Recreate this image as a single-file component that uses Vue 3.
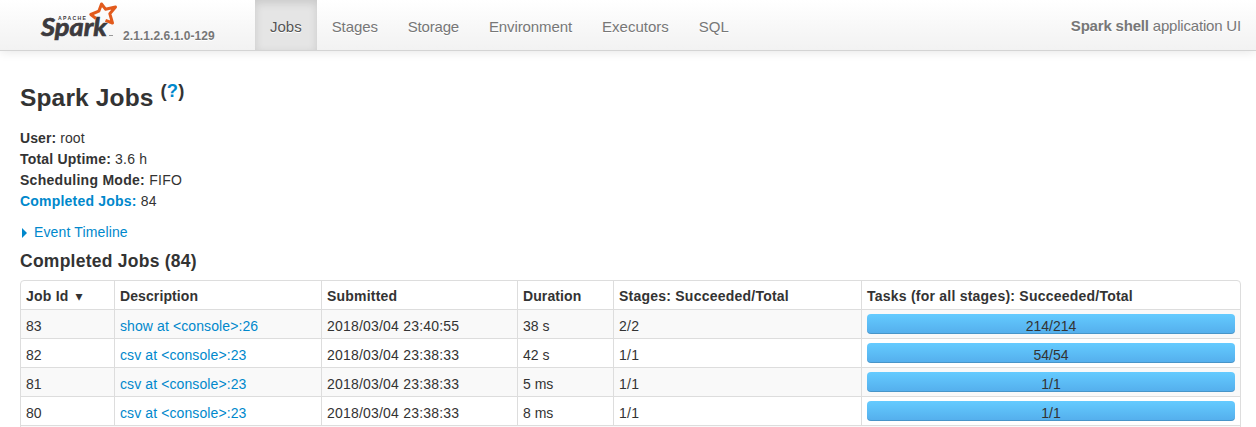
<script setup>
const tabs = ['Jobs', 'Stages', 'Storage', 'Environment', 'Executors', 'SQL']
const columns = [
  { key: 'id', label: 'Job Id' },
  { key: 'desc', label: 'Description' },
  { key: 'submitted', label: 'Submitted' },
  { key: 'duration', label: 'Duration' },
  { key: 'stages', label: 'Stages: Succeeded/Total' },
  { key: 'tasks', label: 'Tasks (for all stages): Succeeded/Total' },
]
const jobs = [
  { id: 83, desc: 'show at <console>:26', submitted: '2018/03/04 23:40:55', duration: '38 s', stages: '2/2', tasks: '214/214' },
  { id: 82, desc: 'csv at <console>:23', submitted: '2018/03/04 23:38:33', duration: '42 s', stages: '1/1', tasks: '54/54' },
  { id: 81, desc: 'csv at <console>:23', submitted: '2018/03/04 23:38:33', duration: '5 ms', stages: '1/1', tasks: '1/1' },
  { id: 80, desc: 'csv at <console>:23', submitted: '2018/03/04 23:38:33', duration: '8 ms', stages: '1/1', tasks: '1/1' },
]
</script>

<template>
  <div class="page">
    <header class="navbar">
      <div class="brand">
        <svg class="logo" width="80" height="44" viewBox="0 0 80 44">
          <text class="apache" x="18" y="19.700" textLength="28">APACHE</text>
          <text class="spark" x="1" y="36" textLength="66" lengthAdjust="spacingAndGlyphs">Spark</text>
          <path class="star" d="M56 18.500 50.800 14.500 58.800 11.200 61.500 4 65.500 9.200 75.500 7 69.800 13.700 72.500 23 65.500 20.300" />
          <path class="tm" d="M69 35.500h4" />
        </svg>
        <span class="version">2.1.1.2.6.1.0-129</span>
      </div>
      <nav class="tabs">
        <a v-for="(tab, i) in tabs" :key="tab" class="tab" :class="[tab.toLowerCase(), { active: i === 0 }]">{{ tab }}</a>
      </nav>
      <p class="app-name"><strong>Spark shell</strong> application UI</p>
    </header>

    <main class="content">
      <h3 class="title">Spark Jobs <sup class="help">(<a>?</a>)</sup></h3>
      <ul class="summary">
        <li class="user"><strong>User:</strong> root</li>
        <li><strong>Total Uptime:</strong> 3.6 h</li>
        <li class="mode"><strong>Scheduling Mode:</strong> FIFO</li>
        <li><a><strong>Completed Jobs:</strong></a> 84</li>
      </ul>
      <a class="timeline"><i class="arrow"></i>Event Timeline</a>
      <h4 class="subtitle">Completed Jobs (84)</h4>

      <div class="table">
        <div class="row head">
          <div v-for="c in columns" :key="c.key" class="cell" :class="c.key">{{ c.label }}<span v-if="c.key === 'id'" class="sort">▾</span></div>
        </div>
        <div v-for="job in jobs" :key="job.id" class="row">
          <div class="cell">{{ job.id }}</div>
          <div class="cell desc"><a>{{ job.desc }}</a></div>
          <div class="cell submitted">{{ job.submitted }}</div>
          <div class="cell">{{ job.duration }}</div>
          <div class="cell stages">{{ job.stages }}</div>
          <div class="cell tasks"><div class="progress">{{ job.tasks }}</div></div>
        </div>
        <div class="row"></div>
      </div>
    </main>
  </div>
</template>

<style>
html, body { overflow: hidden; }
</style>

<style scoped>
.page {
  height: 427px;
  overflow: hidden;
  background: #fff;
  color: #333;
  font: 14px/21px "Liberation Sans", Arial, sans-serif;
}
a { color: #0088cc; }
.navbar {
  box-sizing: border-box;
  height: 51px;
  display: flex;
  background: linear-gradient(#fff, #f2f2f2);
  border-bottom: 1px solid #d4d4d4;
  box-shadow: 0 1px 10px rgba(0, 0, 0, 0.1);
  color: #777;
  font-size: 15px;
  text-shadow: 0 1px 0 #fff;
}
.brand { width: 215px; padding-left: 40px; display: flex; }
.logo { flex: none; text-shadow: none; }
.apache { font: bold 5.2px "Liberation Sans", sans-serif; fill: #3c3a3e; }
.spark { font: italic bold 25.5px Lato, sans-serif; fill: #3c3a3e; stroke: #3c3a3e; stroke-width: 0.7; }
.star { fill: none; stroke: #e25a1c; stroke-width: 3; stroke-linejoin: round; }
.tm { stroke: #999; }
.version { margin: 26px 0 0 3px; font-size: 12px; font-weight: bold; line-height: 20px; letter-spacing: 0.06px; }
.tabs { display: flex; }
.tab { padding: 17px 15px 0; line-height: 20px; color: #777; }
.tab.active { color: #555; background: #e5e5e5; box-shadow: inset 0 3px 8px rgba(0, 0, 0, 0.125); }
.tab.stages { letter-spacing: -0.1px; }
.tab.storage { letter-spacing: -0.2px; }
.tab.environment { letter-spacing: -0.1px; }
.app-name { margin: 16px 15px 0 auto; line-height: 20px; letter-spacing: -0.19px; }
.content { padding: 0 15px 0 20px; }
.title { margin: 27px 0 0; height: 50px; font-size: 24.5px; line-height: 40px; letter-spacing: 0.15px; }
.help { font-size: 18.4px; line-height: 0; position: relative; top: -0.5em; vertical-align: baseline; }
.summary { list-style: none; margin: 0; padding: 0; letter-spacing: 0.2px; }
.user { letter-spacing: 0.08px; }
.mode { letter-spacing: 0.28px; }
.timeline { display: flex; align-items: center; margin-top: 10px; letter-spacing: 0.14px; }
.arrow { width: 0; border: 5px solid transparent; border-left-color: #0088cc; border-right: 0; margin: 0 7px 0 2px; }
.subtitle { margin: 8px 0 8px; font-size: 17.5px; line-height: 21px; letter-spacing: 0.25px; }
.table { border: 1px solid #ddd; border-radius: 4px 4px 0 0; overflow: hidden; }
.row { display: grid; grid-template-columns: 93px 207px 196px 96px 248px 1fr; height: 28px; border-top: 1px solid #ddd; }
.row:nth-child(even) { background: #f9f9f9; }
.row.head { border-top: 0; font-weight: bold; }
.cell { padding: 6px 5px 0; border-left: 1px solid #ddd; line-height: 21px; white-space: nowrap; }
.head .cell { padding-top: 5px; }
.cell:first-child { border-left: 0; }
.cell.desc { letter-spacing: 0.1px; }
.cell.submitted { letter-spacing: 0.2px; }
.cell.stages, .head .tasks, .head .id { letter-spacing: 0.23px; }
.head .duration { letter-spacing: 0.1px; }
.sort { margin-left: 7px; font: 14px/1 "DejaVu Sans", sans-serif; }
.progress {
  height: 20px;
  margin-top: -2px;
  border-radius: 4px;
  text-align: center;
  line-height: 25px;
  background: linear-gradient(#64cbff, #54aeec);
  box-shadow: inset 0 -1px 0 rgba(0, 0, 0, 0.15);
}
</style>
